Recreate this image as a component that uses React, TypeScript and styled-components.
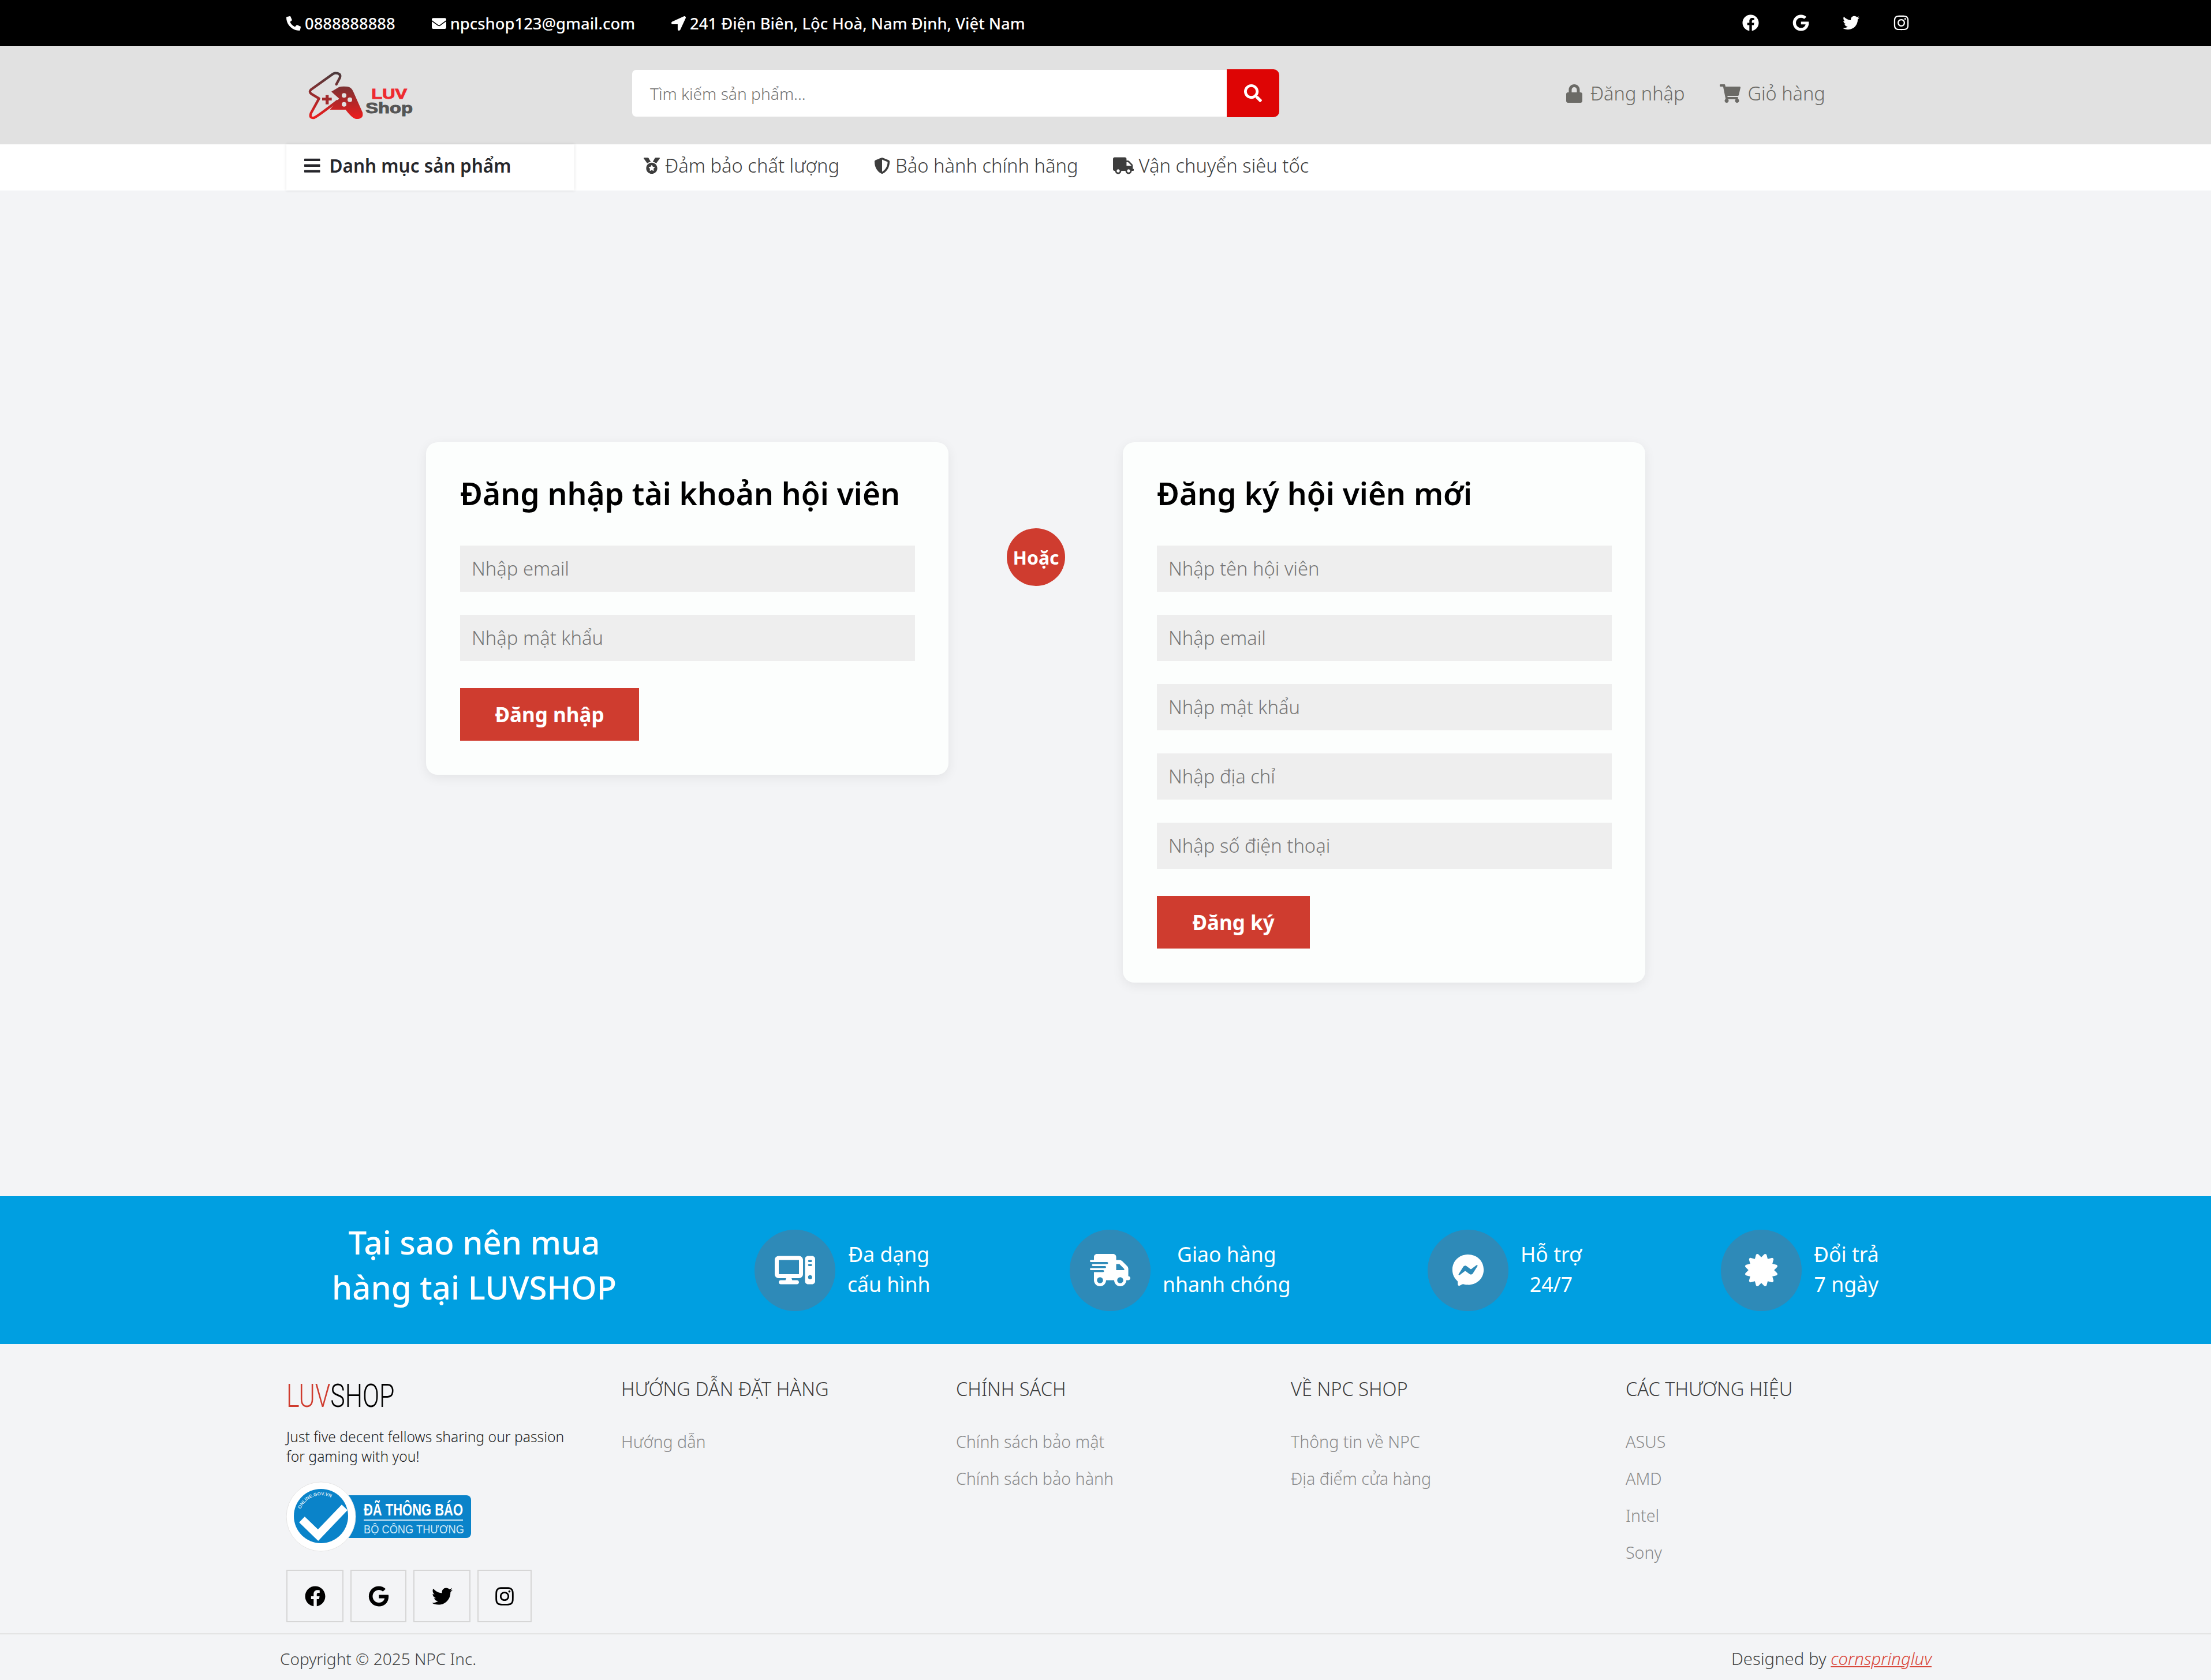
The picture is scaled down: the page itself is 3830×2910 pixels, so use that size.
import React from "react";
import styled, { createGlobalStyle } from "styled-components";
import {
  FaPhoneAlt,
  FaEnvelope,
  FaLocationArrow,
  FaFacebook,
  FaGoogle,
  FaTwitter,
  FaInstagram,
  FaSearch,
  FaLock,
  FaShoppingCart,
  FaBars,
  FaMedal,
  FaShieldAlt,
  FaTruck,
  FaFacebookMessenger,
  FaCertificate,
} from "react-icons/fa";
import { FaComputer, FaTruckFast } from "react-icons/fa6";

const GlobalStyle = createGlobalStyle`
  html, body {
    margin: 0;
    padding: 0;
    background: #f3f4f6;
    font-family: "Noto Sans", "Open Sans", sans-serif;
    color: #000;
  }
  * { box-sizing: border-box; }
`;

const Page = styled.div`
  width: 3830px;
  height: 2910px;
  display: flex;
  flex-direction: column;
  overflow: hidden;
`;

const TopBar = styled.div`
  height: 80px;
  background: #000;
  color: #fff;
  padding: 0 522px 0 496px;
  display: flex;
  align-items: center;
  justify-content: space-between;
  font-size: 27.4px;
  font-weight: 500;
`;

const TopGroup = styled.div`
  display: flex;
  align-items: center;
  gap: 63px;
`;

const TopItem = styled.span`
  display: flex;
  align-items: center;
  gap: 7px;
  svg { font-size: 25px; }
`;

const TopSocial = styled.div`
  display: flex;
  gap: 58px;
  font-size: 29px;
  margin-bottom: 2px;
`;

const Header = styled.div`
  height: 170px;
  background: #e1e1e1;
  padding-left: 500px;
  display: flex;
  align-items: center;
`;

const LogoBox = styled.div`
  width: 595px;
  height: 130px;
`;

const SearchForm = styled.div`
  width: 1121px;
  height: 83px;
  margin-bottom: 7px;
  display: flex;
`;

const SearchInput = styled.div`
  flex: 1;
  margin: 1px 0;
  background: #fff;
  border-radius: 7px 0 0 7px;
  padding-left: 31px;
  display: flex;
  align-items: center;
  font-size: 28.2px;
  font-weight: 300;
  color: #757575;
`;

const SearchButton = styled.div`
  width: 91px;
  background: #de0505;
  border-radius: 0 10px 10px 0;
  color: #fff;
  font-size: 31px;
  display: flex;
  align-items: center;
  justify-content: center;
`;

const HeaderLinks = styled.div`
  margin-left: 495px;
  margin-bottom: 7px;
  display: flex;
  gap: 61px;
  font-size: 32.5px;
  font-weight: 300;
  color: #6b6a66;
`;

const HeaderLink = styled.span<{ $icon: number }>`
  display: flex;
  align-items: center;
  gap: 12px;
  svg { font-size: ${(p) => p.$icon}px; }
`;

const NavBar = styled.div`
  height: 80px;
  background: #fff;
  padding-left: 496px;
  display: flex;
  align-items: center;
`;

const CategoryBox = styled.div`
  width: 499px;
  height: 80px;
  padding: 0 0 7px 29px;
  display: flex;
  align-items: center;
  gap: 14px;
  font-size: 31.5px;
  font-weight: 600;
  color: #26262b;
  box-shadow: 0 0 5px rgba(0, 0, 0, 0.12);
`;

const NavLinks = styled.div`
  margin-left: 120px;
  padding-bottom: 7px;
  display: flex;
  gap: 60px;
  font-size: 32.7px;
  font-weight: 300;
  color: #3d3d3d;
`;

const NavLink = styled.span<{ $icon: number }>`
  display: flex;
  align-items: center;
  gap: 9px;
  svg { font-size: ${(p) => p.$icon}px; }
`;

const Main = styled.div`
  height: 1742px;
  padding: 436px 0 0 738px;
  display: flex;
  align-items: flex-start;
`;

const Card = styled.div`
  width: 905px;
  padding: 57px 58px 59px 59px;
  background: #fcfefd;
  border-radius: 20px;
  box-shadow: 0 5px 20px rgba(0, 0, 0, 0.07);
`;

const CardTitle = styled.h2`
  margin: 0 0 59px;
  font-size: 53.3px;
  line-height: 63px;
  font-weight: 600;
  color: #000;
`;

const Field = styled.div`
  height: 80px;
  margin-bottom: 40px;
  background: #eeeeee;
  padding: 0 0 2px 20px;
  display: flex;
  align-items: center;
  font-size: 32.7px;
  font-weight: 300;
  color: #757575;
`;

const SubmitButton = styled.div<{ $w: number }>`
  display: flex;
  align-items: center;
  justify-content: center;
  height: 91px;
  width: ${(p) => p.$w}px;
  margin-top: 47px;
  background: #cf3c2f;
  color: #fff;
  font-size: 35px;
  font-weight: 700;
`;

const OrBadge = styled.div`
  width: 101px;
  height: 100px;
  margin: 149px 100px 0 101px;
  border-radius: 50%;
  background: #cf3c2f;
  color: #fff;
  font-size: 32px;
  font-weight: 700;
  flex-shrink: 0;
  display: flex;
  align-items: center;
  justify-content: center;
`;

const WhyBar = styled.div`
  height: 256px;
  background: #009fe1;
  color: #fff;
  display: grid;
  grid-template-columns: 1307px 546px 620px 508px 1fr;
  align-items: center;
`;

const WhyTitle = styled.div`
  padding: 0 160px 20px 496px;
  text-align: center;
  font-size: 56.3px;
  line-height: 78px;
  font-weight: 500;
  white-space: nowrap;
`;

const WhyItem = styled.div`
  display: flex;
  align-items: center;
  gap: 21px;
  font-size: 35.6px;
  font-weight: 400;
  line-height: 52px;
  text-align: center;
`;

const WhyIcon = styled.div<{ $icon: number }>`
  width: 140px;
  height: 141px;
  border-radius: 50%;
  background: #2e8ab8;
  font-size: ${(p) => p.$icon}px;
  display: flex;
  align-items: center;
  justify-content: center;
  flex-shrink: 0;
`;

const WhyLabel = styled.div`
  margin-bottom: 5px;
`;

const Footer = styled.div`
  flex: 1;
  display: flex;
  flex-direction: column;
`;

const FooterCols = styled.div`
  height: 501px;
  padding: 56px 0 0 496px;
  display: grid;
  grid-template-columns: repeat(5, 580px);
`;

const Brand = styled.div`
  font-family: Roboto, sans-serif;
  font-weight: 300;
  font-size: 55px;
  line-height: 68px;
  transform-origin: left;
  transform: scaleX(0.78);
  white-space: nowrap;
  span { color: #cf3c2f; }
`;

const BrandText = styled.p`
  margin: 20px 0 0;
  font-size: 24.7px;
  font-weight: 300;
  line-height: 34px;
  color: #1d1d1d;
`;

const Badge = styled.div`
  width: 320px;
  height: 122px;
  margin-top: 26px;
`;

const SocialRow = styled.div`
  margin-top: 31px;
  display: flex;
  gap: 12px;
`;

const SocialBox = styled.div<{ $w: number }>`
  width: ${(p) => p.$w}px;
  height: 91px;
  border: 2px solid #d6d6d6;
  font-size: 36px;
  display: flex;
  align-items: center;
  justify-content: center;
`;

const ColTitle = styled.div`
  font-size: 32.6px;
  font-weight: 300;
  line-height: 44px;
  color: #3d3d3d;
  margin-bottom: 37px;
`;

const ColLink = styled.div`
  font-size: 28.6px;
  font-weight: 300;
  line-height: 64px;
  color: #8b8b8b;
`;

const CopyBar = styled.div`
  flex: 1;
  border-top: 2px solid #e3e3e3;
  padding: 4px 484px 0 485px;
  display: flex;
  align-items: center;
  justify-content: space-between;
  font-size: 28px;
  font-weight: 300;
  color: #444;
`;

const DesignedBy = styled.span`
  font-size: 29.3px;
  a { color: #d9483b; font-style: italic; text-decoration: underline; }
`;

const GameLogo = () => (
  <svg width="260" height="130" viewBox="0 0 780 390">
    <defs>
      <linearGradient id="lg" gradientUnits="userSpaceOnUse" x1="0" y1="80" x2="0" y2="320">
        <stop offset="0" stopColor="#4a3a3c" />
        <stop offset="1" stopColor="#f01c1c" />
      </linearGradient>
    </defs>
    <path
      d="M248 138 L266 104 Q274 82 246 80 Q236 78 222 90 L116 166 Q104 176 118 188 L158 212 L116 288 Q106 316 132 312 Q146 308 252 226"
      fill="none"
      stroke="url(#lg)"
      strokeWidth="13"
      strokeLinecap="round"
      strokeLinejoin="round"
    />
    <path
      d="M222 176 L262 152 Q276 148 304 150 Q326 152 336 176 L384 284 Q392 318 352 318 Q332 318 296 270 L214 270 L262 212 Z"
      fill="url(#lg)"
    />
    <circle cx="288" cy="196" r="12" fill="#e1e1e1" />
    <circle cx="318" cy="218" r="12" fill="#e1e1e1" />
    <circle cx="288" cy="242" r="12" fill="#e1e1e1" />
    <path d="M192 194h16v14h16v14h-16v20h-16v-20h-18v-14h18z" fill="#a12a2c" />
    <text x="430" y="212" fontFamily="Liberation Sans" fontWeight="700" fontSize="72" fill="#ee2b30" stroke="#ee2b30" strokeWidth="3" textLength="185" lengthAdjust="spacingAndGlyphs">LUV</text>
    <text x="400" y="288" fontFamily="Liberation Sans" fontWeight="700" fontSize="76" fill="#555" stroke="#555" strokeWidth="3" textLength="245" lengthAdjust="spacingAndGlyphs">Shop</text>
  </svg>
);

const NotifyBadge = () => (
  <svg width="320" height="122" viewBox="0 0 320 122" overflow="visible">
    <defs>
      <path id="arc" d="M25 48 A 38 38 0 0 1 86 34" />
    </defs>
    <rect x="100" y="24" width="220" height="74" rx="8" fill="#0a83c9" />
    <circle cx="60" cy="61" r="60" fill="#fff" stroke="#e4e4e4" />
    <circle cx="60" cy="60" r="47" fill="#0a83c9" />
    <path d="M27 66 L55 93 L101 45" fill="none" stroke="#fff" strokeWidth="14" />
    <text fontFamily="Liberation Sans" fontWeight="700" fontSize="8" fill="#cfe6f5">
      <textPath href="#arc">ONLINE.GOV.VN</textPath>
    </text>
    <text x="134" y="59" fontFamily="Liberation Sans" fontWeight="700" fontSize="30" fill="#fff" textLength="172" lengthAdjust="spacingAndGlyphs">ĐÃ THÔNG BÁO</text>
    <rect x="134" y="66" width="172" height="2" fill="#d0e8f6" />
    <text x="134" y="90" fontFamily="Liberation Sans" fontSize="20" fill="#d0e8f6" textLength="174" lengthAdjust="spacingAndGlyphs">BỘ CÔNG THƯƠNG</text>
  </svg>
);

const footerColumns = [
  { title: "HƯỚNG DẪN ĐẶT HÀNG", links: ["Hướng dẫn"] },
  { title: "CHÍNH SÁCH", links: ["Chính sách bảo mật", "Chính sách bảo hành"] },
  { title: "VỀ NPC SHOP", links: ["Thông tin về NPC", "Địa điểm cửa hàng"] },
  { title: "CÁC THƯƠNG HIỆU", links: ["ASUS", "AMD", "Intel", "Sony"] },
];

const App: React.FC = () => {
  return (
    <Page>
      <GlobalStyle />
      <TopBar>
        <TopGroup>
          <TopItem><FaPhoneAlt />0888888888</TopItem>
          <TopItem><FaEnvelope />npcshop123@gmail.com</TopItem>
          <TopItem><FaLocationArrow />241 Điện Biên, Lộc Hoà, Nam Định, Việt Nam</TopItem>
        </TopGroup>
        <TopSocial>
          <FaFacebook />
          <FaGoogle />
          <FaTwitter />
          <FaInstagram />
        </TopSocial>
      </TopBar>
      <Header>
        <LogoBox><GameLogo /></LogoBox>
        <SearchForm>
          <SearchInput>Tìm kiếm sản phẩm...</SearchInput>
          <SearchButton><FaSearch /></SearchButton>
        </SearchForm>
        <HeaderLinks>
          <HeaderLink $icon={32}><FaLock />Đăng nhập</HeaderLink>
          <HeaderLink $icon={36}><FaShoppingCart />Giỏ hàng</HeaderLink>
        </HeaderLinks>
      </Header>
      <NavBar>
        <CategoryBox><FaBars />Danh mục sản phẩm</CategoryBox>
        <NavLinks>
          <NavLink $icon={28}><FaMedal />Đảm bảo chất lượng</NavLink>
          <NavLink $icon={28}><FaShieldAlt />Bảo hành chính hãng</NavLink>
          <NavLink $icon={36}><FaTruck />Vận chuyển siêu tốc</NavLink>
        </NavLinks>
      </NavBar>
      <Main>
        <Card>
          <CardTitle>Đăng nhập tài khoản hội viên</CardTitle>
          <Field>Nhập email</Field>
          <Field>Nhập mật khẩu</Field>
          <SubmitButton $w={310}>Đăng nhập</SubmitButton>
        </Card>
        <OrBadge>Hoặc</OrBadge>
        <Card>
          <CardTitle>Đăng ký hội viên mới</CardTitle>
          <Field>Nhập tên hội viên</Field>
          <Field>Nhập email</Field>
          <Field>Nhập mật khẩu</Field>
          <Field>Nhập địa chỉ</Field>
          <Field>Nhập số điện thoại</Field>
          <SubmitButton $w={265}>Đăng ký</SubmitButton>
        </Card>
      </Main>
      <WhyBar>
        <WhyTitle>Tại sao nên mua<br />hàng tại LUVSHOP</WhyTitle>
        <WhyItem><WhyIcon $icon={70}><FaComputer /></WhyIcon><WhyLabel>Đa dạng<br />cấu hình</WhyLabel></WhyItem>
        <WhyItem><WhyIcon $icon={70}><FaTruckFast /></WhyIcon><WhyLabel>Giao hàng<br />nhanh chóng</WhyLabel></WhyItem>
        <WhyItem><WhyIcon $icon={56}><FaFacebookMessenger /></WhyIcon><WhyLabel>Hỗ trợ<br />24/7</WhyLabel></WhyItem>
        <WhyItem><WhyIcon $icon={56}><FaCertificate /></WhyIcon><WhyLabel>Đổi trả<br />7 ngày</WhyLabel></WhyItem>
      </WhyBar>
      <Footer>
        <FooterCols>
          <div>
            <Brand><span>LUV</span>SHOP</Brand>
            <BrandText>Just five decent fellows sharing our passion<br />for gaming with you!</BrandText>
            <Badge><NotifyBadge /></Badge>
            <SocialRow>
              <SocialBox $w={99}><FaFacebook /></SocialBox>
              <SocialBox $w={97}><FaGoogle /></SocialBox>
              <SocialBox $w={99}><FaTwitter /></SocialBox>
              <SocialBox $w={94}><FaInstagram /></SocialBox>
            </SocialRow>
          </div>
          {footerColumns.map((col) => (
            <div key={col.title}>
              <ColTitle>{col.title}</ColTitle>
              {col.links.map((l) => (
                <ColLink key={l}>{l}</ColLink>
              ))}
            </div>
          ))}
        </FooterCols>
        <CopyBar>
          <span>Copyright © 2025 NPC Inc.</span>
          <DesignedBy>Designed by <a>cornspringluv</a></DesignedBy>
        </CopyBar>
      </Footer>
    </Page>
  );
};

export default App;
